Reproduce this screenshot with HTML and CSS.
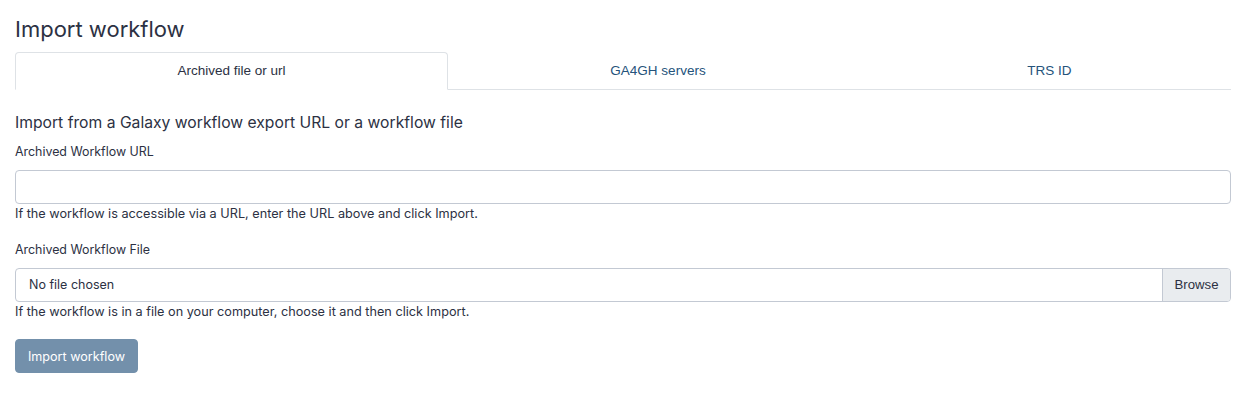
FILE: index.html
```html
<!DOCTYPE html>
<html lang="en">
<head>
<meta charset="utf-8">
<title>Import workflow</title>
<link rel="stylesheet" href="styles.css">
</head>
<body>
<div class="page">
  <h1 class="title">Import workflow</h1>
  <ul class="tabs">
    <li class="tab active">Archived file or url</li>
    <li class="tab">GA4GH servers</li>
    <li class="tab">TRS ID</li>
  </ul>
  <div class="panel">
    <h4 class="section-title">Import from a Galaxy workflow export URL or a workflow file</h4>
    <label class="label">Archived Workflow URL</label>
    <div class="input"></div>
    <div class="help">If the workflow is accessible via a URL, enter the URL above and click Import.</div>
    <label class="label label-second">Archived Workflow File</label>
    <div class="file-input">
      <span class="file-name">No file chosen</span>
      <span class="browse">Browse</span>
    </div>
    <div class="help">If the workflow is in a file on your computer, choose it and then click Import.</div>
    <button class="btn-import" type="button">Import workflow</button>
  </div>
</div>
</body>
</html>
```
FILE: styles.css
```css
* { box-sizing: border-box; }
html, body { margin: 0; background: #fff; }
body {
  font-family: Inter, "Noto Sans", sans-serif;
  color: #2c3143;
}
.page {
  padding: 16px 10px 0 15px;
}
.title {
  margin: 0;
  font-size: 22px;
  line-height: 26px;
  font-weight: 400;
}
.tabs {
  list-style: none;
  margin: 10px 0 0;
  padding: 0;
  display: flex;
  border-bottom: 1px solid #dee2e6;
}
.tab {
  flex: 1 1 auto;
  text-align: center;
  font-family: "Liberation Sans", Arial, sans-serif;
  font-size: 13.5px;
  line-height: 36px;
  color: #25537b;
  border: 1px solid transparent;
  border-top-left-radius: 4px;
  border-top-right-radius: 4px;
  margin-bottom: -1px;
}
.tab:nth-child(1) { flex: 0 0 433px; }
.tab:nth-child(2) { flex: 0 0 420px; }
.tab:nth-child(3) { flex: 1 1 auto; }
.tab.active {
  color: #2c3143;
  border-color: #dee2e6 #dee2e6 #fff;
  background: #fff;
}
.panel {
  display: flex;
  flex-direction: column;
  align-items: flex-start;
}
.section-title {
  margin: 23px 0 0;
  font-size: 15.7px;
  line-height: 20px;
  font-weight: 400;
}
.label {
  display: block;
  margin: 11px 0 10px;
  font-size: 12.4px;
  line-height: 16px;
}
.label-second { margin-top: 20px; }
.input, .file-input {
  width: 100%;
  height: 34px;
  border: 1px solid #c3c9d3;
  border-radius: 4px;
  background: #fff;
}
.file-input {
  display: flex;
  align-items: stretch;
  overflow: hidden;
}
.file-name {
  flex: 1 1 auto;
  padding-left: 13px;
  font-size: 12.5px;
  line-height: 32px;
}
.browse {
  flex: 0 0 auto;
  width: 68px;
  text-align: center;
  background: #e9ecef;
  border-left: 1px solid #c3c9d3;
  font-family: "Liberation Sans", Arial, sans-serif;
  font-size: 13.2px;
  line-height: 32px;
  color: #2c3143;
}
.help {
  margin-top: 2px;
  font-size: 12.7px;
  line-height: 16px;
}
.btn-import {
  margin-top: 19px;
  height: 34px;
  width: 123px;
  padding: 0;
  border: 1px solid #7390ab;
  border-radius: 4px;
  background: #7390ab;
  color: #fff;
  font-family: Inter, "Noto Sans", sans-serif;
  font-size: 12.6px;
}
```
